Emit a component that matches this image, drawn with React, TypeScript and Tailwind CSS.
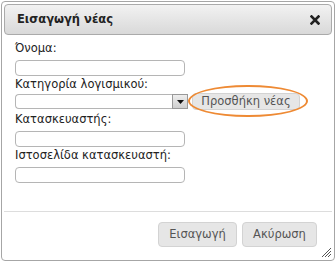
export default function App() {
  const fields = ["Όνομα:", "Κατηγορία λογισμικού:", "Κατασκευαστής:", "Ιστοσελίδα κατασκευαστή:"];

  return (
    <div className="w-[336px] h-[262px] bg-white pt-[1px] pl-[1px] font-['DejaVu_Sans',Verdana,sans-serif]">
      <div className="relative w-[334px] h-[260px] border border-[#a6a6a6] rounded-[4px] bg-white p-[2px] flex flex-col">
        {/* title bar */}
        <div className="h-[31px] border border-[#aaaaaa] rounded-[4px] bg-gradient-to-b from-[#f2f2f2] to-[#d9d9d9] flex items-center justify-between pl-[12px] pr-[11px]">
          <span className="text-[11.5px] font-bold text-[#222]">Εισαγωγή νέας</span>
          <svg width="10" height="10" viewBox="0 0 10 10">
            <path d="M1.5 1.5 L8.5 8.5 M8.5 1.5 L1.5 8.5" stroke="#222" strokeWidth="2.6" strokeLinecap="square" />
          </svg>
        </div>

        {/* body */}
        <div className="flex flex-col pl-[11px] pt-[6px] text-[11.5px] text-[#222]">
          {fields.map((label, idx) => (
            <div key={idx} className="flex flex-col">
              <span className="leading-[15px] h-[15px]">{label}</span>
              {idx === 1 ? (
                <div className="flex items-center mt-[1px] mb-[2px]">
                  <div className="flex">
                    <div className="w-[157px] h-[15px] border border-[#b5b5b5] border-r-0 rounded-l-[4px] bg-white" />
                    <div className="w-[16px] h-[15px] border border-[#999] bg-gradient-to-b from-[#eeeeee] to-[#cfcfcf] flex items-center justify-center">
                      <svg width="7" height="4" viewBox="0 0 7 4">
                        <path d="M0 0 H7 L3.5 4 Z" fill="#111" />
                      </svg>
                    </div>
                  </div>
                  <div className="relative ml-[4px]">
                    <button className="h-[17px] w-[108px] border border-[#d3d3d3] rounded-[4px] bg-[#e6e6e6] text-[11.5px] text-[#555] leading-[15px]">
                      Προσθήκη νέας
                    </button>
                    <div className="absolute -left-[4px] -right-[8px] -top-[8px] -bottom-[7px] border-2 border-[#ee8a34] rounded-[50%]" />
                  </div>
                </div>
              ) : (
                <div className="w-[170px] h-[16px] mt-[4px] mb-[1px] border border-[#b5b5b5] rounded-[4px] bg-white" />
              )}
            </div>
          ))}
        </div>

        {/* footer */}
        <div className="mt-auto h-[47px] border-t border-[#dddddd] flex justify-end items-start pt-[10px] pr-[15px] gap-[5px]">
          <button className="h-[25px] w-[79px] border border-[#d3d3d3] rounded-[4px] bg-[#e6e6e6] text-[11.5px] text-[#555]">
            Εισαγωγή
          </button>
          <button className="h-[25px] w-[75px] border border-[#d3d3d3] rounded-[4px] bg-[#e6e6e6] text-[11.5px] text-[#555]">
            Ακύρωση
          </button>
        </div>

        {/* resize grip */}
        <svg className="absolute right-[2px] bottom-[2px]" width="11" height="11" viewBox="0 0 11 11">
          <path d="M1 10 L10 1 M4 10 L10 4 M7 10 L10 7" stroke="#555" strokeWidth="1" />
        </svg>
      </div>
    </div>
  );
}
